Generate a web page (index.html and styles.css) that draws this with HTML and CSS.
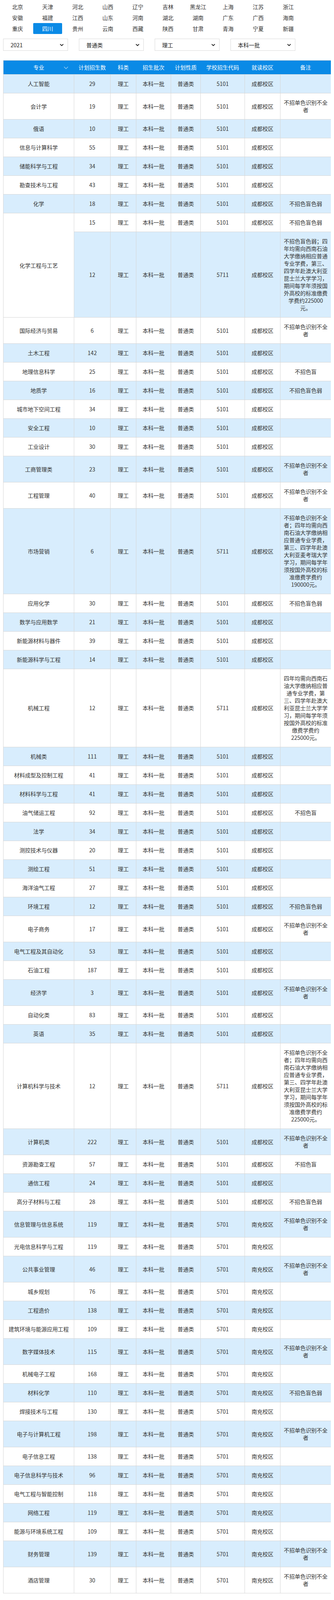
FILE: index.html
```html
<!DOCTYPE html>
<html lang="zh-CN">
<head>
<meta charset="utf-8">
<title>招生计划</title>
<link rel="stylesheet" href="styles.css">
</head>
<body>
<ul class="provinces">
  <li>北京</li><li>天津</li><li>河北</li><li>山西</li><li>辽宁</li><li>吉林</li><li>黑龙江</li><li>上海</li><li>江苏</li><li>浙江</li>
  <li>安徽</li><li>福建</li><li>江西</li><li>山东</li><li>河南</li><li>湖北</li><li>湖南</li><li>广东</li><li>广西</li><li>海南</li>
  <li>重庆</li><li class="active">四川</li><li>贵州</li><li>云南</li><li>西藏</li><li>陕西</li><li>甘肃</li><li>青海</li><li>宁夏</li><li>新疆</li>
</ul>

<div class="filters">
  <div class="select"><span>2021</span><svg class="caret" viewBox="0 0 10 6" width="10" height="6"><polyline points="1,1 5,5 9,1"/></svg></div>
  <div class="select"><span>普通类</span><svg class="caret" viewBox="0 0 10 6" width="10" height="6"><polyline points="1,1 5,5 9,1"/></svg></div>
  <div class="select"><span>理工</span><svg class="caret" viewBox="0 0 10 6" width="10" height="6"><polyline points="1,1 5,5 9,1"/></svg></div>
  <div class="select"><span>本科一批</span><svg class="caret" viewBox="0 0 10 6" width="10" height="6"><polyline points="1,1 5,5 9,1"/></svg></div>
</div>

<table class="plan">
  <colgroup>
    <col class="c-major"><col class="c-num"><col class="c-type"><col class="c-batch"><col class="c-nature"><col class="c-code"><col class="c-campus"><col class="c-note">
  </colgroup>
  <thead>
    <tr>
      <th class="major-th">专业<svg class="sort" viewBox="0 0 12 7" width="12" height="7"><polyline points="1,1 6,6 11,1"/></svg></th>
      <th>计划招生数</th><th>科类</th><th>招生批次</th><th>计划性质</th><th>学校招生代码</th><th>就读校区</th><th>备注</th>
    </tr>
  </thead>
  <tbody>
    <tr><td>人工智能</td><td>29</td><td>理工</td><td>本科一批</td><td>普通类</td><td>5101</td><td>成都校区</td><td></td></tr>
    <tr><td>会计学</td><td>19</td><td>理工</td><td>本科一批</td><td>普通类</td><td>5101</td><td>成都校区</td><td>不招单色识别不全者</td></tr>
    <tr><td>俄语</td><td>10</td><td>理工</td><td>本科一批</td><td>普通类</td><td>5101</td><td>成都校区</td><td></td></tr>
    <tr><td>信息与计算科学</td><td>55</td><td>理工</td><td>本科一批</td><td>普通类</td><td>5101</td><td>成都校区</td><td></td></tr>
    <tr><td>储能科学与工程</td><td>34</td><td>理工</td><td>本科一批</td><td>普通类</td><td>5101</td><td>成都校区</td><td></td></tr>
    <tr><td>勘查技术与工程</td><td>43</td><td>理工</td><td>本科一批</td><td>普通类</td><td>5101</td><td>成都校区</td><td></td></tr>
    <tr><td>化学</td><td>18</td><td>理工</td><td>本科一批</td><td>普通类</td><td>5101</td><td>成都校区</td><td>不招色盲色弱</td></tr>
    <tr><td rowspan="2">化学工程与工艺</td><td>15</td><td>理工</td><td>本科一批</td><td>普通类</td><td>5101</td><td>成都校区</td><td>不招色盲色弱</td></tr>
    <tr><td>12</td><td>理工</td><td>本科一批</td><td>普通类</td><td>5711</td><td>成都校区</td><td>不招色盲色弱；四年均需向西南石油大学缴纳相应普通专业学费，第三、四学年赴澳大利亚昆士兰大学学习，期间每学年须按国外高校的标准缴费学费约225000元。</td></tr>
    <tr><td>国际经济与贸易</td><td>6</td><td>理工</td><td>本科一批</td><td>普通类</td><td>5101</td><td>成都校区</td><td>不招单色识别不全者</td></tr>
    <tr><td>土木工程</td><td>142</td><td>理工</td><td>本科一批</td><td>普通类</td><td>5101</td><td>成都校区</td><td></td></tr>
    <tr><td>地理信息科学</td><td>25</td><td>理工</td><td>本科一批</td><td>普通类</td><td>5101</td><td>成都校区</td><td>不招色盲</td></tr>
    <tr><td>地质学</td><td>16</td><td>理工</td><td>本科一批</td><td>普通类</td><td>5101</td><td>成都校区</td><td>不招色盲色弱</td></tr>
    <tr><td>城市地下空间工程</td><td>34</td><td>理工</td><td>本科一批</td><td>普通类</td><td>5101</td><td>成都校区</td><td></td></tr>
    <tr><td>安全工程</td><td>10</td><td>理工</td><td>本科一批</td><td>普通类</td><td>5101</td><td>成都校区</td><td></td></tr>
    <tr><td>工业设计</td><td>30</td><td>理工</td><td>本科一批</td><td>普通类</td><td>5101</td><td>成都校区</td><td></td></tr>
    <tr><td>工商管理类</td><td>23</td><td>理工</td><td>本科一批</td><td>普通类</td><td>5101</td><td>成都校区</td><td>不招单色识别不全者</td></tr>
    <tr><td>工程管理</td><td>40</td><td>理工</td><td>本科一批</td><td>普通类</td><td>5101</td><td>成都校区</td><td>不招单色识别不全者</td></tr>
    <tr><td>市场营销</td><td>6</td><td>理工</td><td>本科一批</td><td>普通类</td><td>5711</td><td>成都校区</td><td>不招单色识别不全者；四年均需向西南石油大学缴纳相应普通专业学费，第三、四学年赴澳大利亚麦考瑞大学学习，期间每学年须按国外高校的标准缴费学费约190000元。</td></tr>
    <tr><td>应用化学</td><td>30</td><td>理工</td><td>本科一批</td><td>普通类</td><td>5101</td><td>成都校区</td><td>不招色盲色弱</td></tr>
    <tr><td>数学与应用数学</td><td>21</td><td>理工</td><td>本科一批</td><td>普通类</td><td>5101</td><td>成都校区</td><td></td></tr>
    <tr><td>新能源材料与器件</td><td>39</td><td>理工</td><td>本科一批</td><td>普通类</td><td>5101</td><td>成都校区</td><td></td></tr>
    <tr><td>新能源科学与工程</td><td>14</td><td>理工</td><td>本科一批</td><td>普通类</td><td>5101</td><td>成都校区</td><td></td></tr>
    <tr><td>机械工程</td><td>12</td><td>理工</td><td>本科一批</td><td>普通类</td><td>5711</td><td>成都校区</td><td>四年均需向西南石油大学缴纳相应普通专业学费，第三、四学年赴澳大利亚昆士兰大学学习，期间每学年须按国外高校的标准缴费学费约225000元。</td></tr>
    <tr><td>机械类</td><td>111</td><td>理工</td><td>本科一批</td><td>普通类</td><td>5101</td><td>成都校区</td><td></td></tr>
    <tr><td>材料成型及控制工程</td><td>41</td><td>理工</td><td>本科一批</td><td>普通类</td><td>5101</td><td>成都校区</td><td></td></tr>
    <tr><td>材料科学与工程</td><td>41</td><td>理工</td><td>本科一批</td><td>普通类</td><td>5101</td><td>成都校区</td><td></td></tr>
    <tr><td>油气储运工程</td><td>92</td><td>理工</td><td>本科一批</td><td>普通类</td><td>5101</td><td>成都校区</td><td>不招色盲</td></tr>
    <tr><td>法学</td><td>34</td><td>理工</td><td>本科一批</td><td>普通类</td><td>5101</td><td>成都校区</td><td></td></tr>
    <tr><td>测控技术与仪器</td><td>20</td><td>理工</td><td>本科一批</td><td>普通类</td><td>5101</td><td>成都校区</td><td></td></tr>
    <tr><td>测绘工程</td><td>51</td><td>理工</td><td>本科一批</td><td>普通类</td><td>5101</td><td>成都校区</td><td></td></tr>
    <tr><td>海洋油气工程</td><td>27</td><td>理工</td><td>本科一批</td><td>普通类</td><td>5101</td><td>成都校区</td><td></td></tr>
    <tr><td>环境工程</td><td>12</td><td>理工</td><td>本科一批</td><td>普通类</td><td>5101</td><td>成都校区</td><td>不招色盲色弱</td></tr>
    <tr><td>电子商务</td><td>17</td><td>理工</td><td>本科一批</td><td>普通类</td><td>5101</td><td>成都校区</td><td>不招单色识别不全者</td></tr>
    <tr><td>电气工程及其自动化</td><td>53</td><td>理工</td><td>本科一批</td><td>普通类</td><td>5101</td><td>成都校区</td><td></td></tr>
    <tr><td>石油工程</td><td>187</td><td>理工</td><td>本科一批</td><td>普通类</td><td>5101</td><td>成都校区</td><td></td></tr>
    <tr><td>经济学</td><td>3</td><td>理工</td><td>本科一批</td><td>普通类</td><td>5101</td><td>成都校区</td><td>不招单色识别不全者</td></tr>
    <tr><td>自动化类</td><td>83</td><td>理工</td><td>本科一批</td><td>普通类</td><td>5101</td><td>成都校区</td><td></td></tr>
    <tr><td>英语</td><td>35</td><td>理工</td><td>本科一批</td><td>普通类</td><td>5101</td><td>成都校区</td><td></td></tr>
    <tr><td>计算机科学与技术</td><td>12</td><td>理工</td><td>本科一批</td><td>普通类</td><td>5711</td><td>成都校区</td><td>不招单色识别不全者；四年均需向西南石油大学缴纳相应普通专业学费，第三、四学年赴澳大利亚昆士兰大学学习，期间每学年须按国外高校的标准缴费学费约225000元。</td></tr>
    <tr><td>计算机类</td><td>222</td><td>理工</td><td>本科一批</td><td>普通类</td><td>5101</td><td>成都校区</td><td>不招单色识别不全者</td></tr>
    <tr><td>资源勘查工程</td><td>57</td><td>理工</td><td>本科一批</td><td>普通类</td><td>5101</td><td>成都校区</td><td>不招色盲</td></tr>
    <tr><td>通信工程</td><td>24</td><td>理工</td><td>本科一批</td><td>普通类</td><td>5101</td><td>成都校区</td><td></td></tr>
    <tr><td>高分子材料与工程</td><td>28</td><td>理工</td><td>本科一批</td><td>普通类</td><td>5101</td><td>成都校区</td><td>不招色盲色弱</td></tr>
    <tr><td>信息管理与信息系统</td><td>119</td><td>理工</td><td>本科一批</td><td>普通类</td><td>5701</td><td>南充校区</td><td>不招单色识别不全者</td></tr>
    <tr><td>光电信息科学与工程</td><td>119</td><td>理工</td><td>本科一批</td><td>普通类</td><td>5701</td><td>南充校区</td><td></td></tr>
    <tr><td>公共事业管理</td><td>46</td><td>理工</td><td>本科一批</td><td>普通类</td><td>5701</td><td>南充校区</td><td>不招单色识别不全者</td></tr>
    <tr><td>城乡规划</td><td>76</td><td>理工</td><td>本科一批</td><td>普通类</td><td>5701</td><td>南充校区</td><td></td></tr>
    <tr><td>工程造价</td><td>138</td><td>理工</td><td>本科一批</td><td>普通类</td><td>5701</td><td>南充校区</td><td></td></tr>
    <tr><td>建筑环境与能源应用工程</td><td>109</td><td>理工</td><td>本科一批</td><td>普通类</td><td>5701</td><td>南充校区</td><td></td></tr>
    <tr><td>数字媒体技术</td><td>115</td><td>理工</td><td>本科一批</td><td>普通类</td><td>5701</td><td>南充校区</td><td>不招单色识别不全者</td></tr>
    <tr><td>机械电子工程</td><td>168</td><td>理工</td><td>本科一批</td><td>普通类</td><td>5701</td><td>南充校区</td><td></td></tr>
    <tr><td>材料化学</td><td>110</td><td>理工</td><td>本科一批</td><td>普通类</td><td>5701</td><td>南充校区</td><td>不招色盲色弱</td></tr>
    <tr><td>焊接技术与工程</td><td>130</td><td>理工</td><td>本科一批</td><td>普通类</td><td>5701</td><td>南充校区</td><td></td></tr>
    <tr><td>电子与计算机工程</td><td>198</td><td>理工</td><td>本科一批</td><td>普通类</td><td>5701</td><td>南充校区</td><td>不招单色识别不全者</td></tr>
    <tr><td>电子信息工程</td><td>138</td><td>理工</td><td>本科一批</td><td>普通类</td><td>5701</td><td>南充校区</td><td></td></tr>
    <tr><td>电子信息科学与技术</td><td>96</td><td>理工</td><td>本科一批</td><td>普通类</td><td>5701</td><td>南充校区</td><td></td></tr>
    <tr><td>电气工程与智能控制</td><td>118</td><td>理工</td><td>本科一批</td><td>普通类</td><td>5701</td><td>南充校区</td><td></td></tr>
    <tr><td>网络工程</td><td>119</td><td>理工</td><td>本科一批</td><td>普通类</td><td>5701</td><td>南充校区</td><td></td></tr>
    <tr><td>能源与环境系统工程</td><td>109</td><td>理工</td><td>本科一批</td><td>普通类</td><td>5701</td><td>南充校区</td><td></td></tr>
    <tr><td>财务管理</td><td>139</td><td>理工</td><td>本科一批</td><td>普通类</td><td>5701</td><td>南充校区</td><td>不招单色识别不全者</td></tr>
    <tr><td>酒店管理</td><td>30</td><td>理工</td><td>本科一批</td><td>普通类</td><td>5701</td><td>南充校区</td><td>不招单色识别不全者</td></tr>
  </tbody>
</table>

<div class="note">注：招生计划及录取批次以当地省级招生主管部门公布为准</div>
</body>
</html>
```

FILE: styles.css
```css
* { box-sizing: border-box; }

html, body {
  background: #ffffff;
}

body {
  margin: 0 8px;
  font-family: "Noto Sans CJK SC", "Noto Sans", sans-serif;
  font-size: 14px;
  color: #333333;
}

.provinces {
  list-style: none;
  margin: 0;
  padding: 3px 0 0 0;
  display: grid;
  grid-template-columns: repeat(10, 74px);
  column-gap: 3px;
  row-gap: 0;
}

.provinces li {
  height: 28px;
  line-height: 28px;
  text-align: center;
  color: #333333;
  border-radius: 2px;
}

.provinces li.active {
  background: #0a8ae6;
  color: #ffffff;
}

.filters {
  display: flex;
  gap: 28px;
  margin-top: 12px;
}

.select {
  width: 166px;
  height: 31px;
  border: 1px solid #d9d9d9;
  display: flex;
  align-items: center;
  justify-content: space-between;
  padding: 0 10px 0 18px;
  color: #222222;
}

.caret {
  fill: none;
  stroke: #222222;
  stroke-width: 1.8;
}

.plan {
  width: 839px;
  margin-top: 24px;
  border-collapse: collapse;
  table-layout: fixed;
  border: 1px solid #d6d6d6;
}

.c-major { width: 181px; }
.c-num { width: 93px; }
.c-type { width: 66px; }
.c-batch { width: 89px; }
.c-nature { width: 76px; }
.c-code { width: 113px; }
.c-campus { width: 91px; }
.c-note { width: 130px; }

.plan th {
  background: #0a8ae6;
  color: #ffffff;
  font-weight: normal;
  padding: 8px 4px;
  height: 36px;
  line-height: 19px;
  text-align: center;
  border-top: 1px solid #d6d6d6;
}

.major-th {
  position: relative;
}

.sort {
  position: absolute;
  right: 15px;
  top: 15px;
  fill: none;
  stroke: #9fd0f5;
  stroke-width: 1.4;
}

.plan td {
  border: 1px solid #d6d6d6;
  padding: 14px 4px;
  height: 48px;
  line-height: 19px;
  text-align: center;
  vertical-align: middle;
  color: #333333;
  background: #ffffff;
}

.plan td:last-child {
  padding-left: 7px;
  padding-right: 7px;
}

.plan tbody tr:nth-child(odd) td {
  background: #d8edfd;
}

.note {
  margin-top: 31px;
  border-top: 1px solid #c4c4c4;
  padding-top: 6px;
  line-height: 22px;
  letter-spacing: 4.3px;
  color: #333333;
}
```
